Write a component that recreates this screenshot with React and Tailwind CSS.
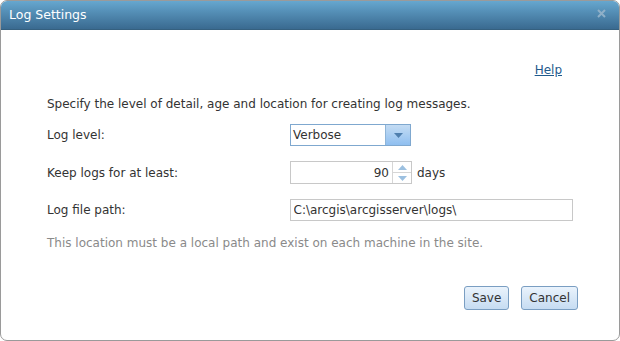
import React, { useState } from 'react';

const font = { fontFamily: '"DejaVu Sans", Tahoma, sans-serif' };

export default function App() {
  const [level, setLevel] = useState('Verbose');
  const [days, setDays] = useState(90);
  const [path, setPath] = useState('C:\\arcgis\\arcgisserver\\logs\\');

  return (
    <div className="w-[620px] h-[341px] bg-white" style={font}>
      <div className="h-full flex flex-col border border-[#9a9a9a] rounded-[7px] overflow-hidden">
        {/* title bar */}
        <div className="h-[29px] shrink-0 flex items-center justify-between pl-[8px] pr-[13px] bg-gradient-to-b from-[#66a7cf] to-[#3a6a90] border-b border-[#35607f]">
          <span className="text-white text-[12.5px]">Log Settings</span>
          <svg width="9" height="9" viewBox="0 0 9 9" className="mb-[4px]">
            <path d="M1 1l7 7M8 1l-7 7" stroke="#8fb0c8" strokeWidth="2" />
          </svg>
        </div>

        <div className="flex-1 flex flex-col px-[46px]">
          <div className="flex justify-end pt-[31px] pr-[11px]">
            <a className="text-[12px] text-[#1f5a8c] underline cursor-pointer">Help</a>
          </div>

          <p className="mt-[16px] text-[12px] text-[#333]">
            Specify the level of detail, age and location for creating log messages.
          </p>

          <div className="mt-[11px] flex items-center h-[22px]">
            <label className="w-[243px] text-[12px] text-[#333]">Log level:</label>
            <div className="flex h-[22px] w-[121px] border border-[#7fa8cf]">
              <div className="flex-1 flex items-center pl-[2px] text-[12px] text-[#333]">{level}</div>
              <button
                onClick={() => setLevel(level)}
                className="w-[25px] flex items-center justify-center border-l border-[#8fb5d8] bg-gradient-to-b from-[#c4dcf3] to-[#8fbff0]"
              >
                <svg width="9" height="5" viewBox="0 0 9 5"><path d="M0 0h9L4.5 5z" fill="#4f7fae" /></svg>
              </button>
            </div>
          </div>

          <div className="mt-[15px] flex items-center h-[23px]">
            <label className="w-[243px] text-[12px] text-[#333]">Keep logs for at least:</label>
            <div className="flex h-[23px] w-[122px] border border-[#c8c8c8]">
              <div className="flex-1 flex items-center justify-end pr-[3px] text-[12px] text-[#333]">{days}</div>
              <div className="w-[19px] flex flex-col border-l border-[#d6d6d6]">
                <button onClick={() => setDays(days + 1)} className="flex-1 flex items-center justify-center border-b border-[#d6d6d6]">
                  <svg width="9" height="5" viewBox="0 0 9 5"><path d="M0 5h9L4.5 0z" fill="#9cc0e0" /></svg>
                </button>
                <button onClick={() => setDays(days - 1)} className="flex-1 flex items-center justify-center">
                  <svg width="9" height="5" viewBox="0 0 9 5"><path d="M0 0h9L4.5 5z" fill="#9cc0e0" /></svg>
                </button>
              </div>
            </div>
            <span className="ml-[5px] text-[12px] text-[#333]">days</span>
          </div>

          <div className="mt-[15px] flex items-center h-[22px]">
            <label className="w-[243px] text-[12px] text-[#333]">Log file path:</label>
            <input
              value={path}
              onChange={(e) => setPath(e.target.value)}
              className="h-[22px] w-[284px] border border-[#c8c8c8] pl-[3px] text-[12px] text-[#333] outline-none"
            />
          </div>

          <p className="mt-[13px] text-[12px] text-[#8a8a8a]">
            This location must be a local path and exist on each machine in the site.
          </p>

          <div className="mt-[34px] flex justify-end gap-[12px] mr-[-5px]">
            <button className="h-[24px] px-[7px] rounded-[3px] border border-[#7a9ec2] bg-gradient-to-b from-[#eaf3fc] to-[#c6dcf2] text-[12px] text-[#333]">Save</button>
            <button className="h-[24px] px-[7px] rounded-[3px] border border-[#7a9ec2] bg-gradient-to-b from-[#eaf3fc] to-[#c6dcf2] text-[12px] text-[#333]">Cancel</button>
          </div>
        </div>
      </div>
    </div>
  );
}
